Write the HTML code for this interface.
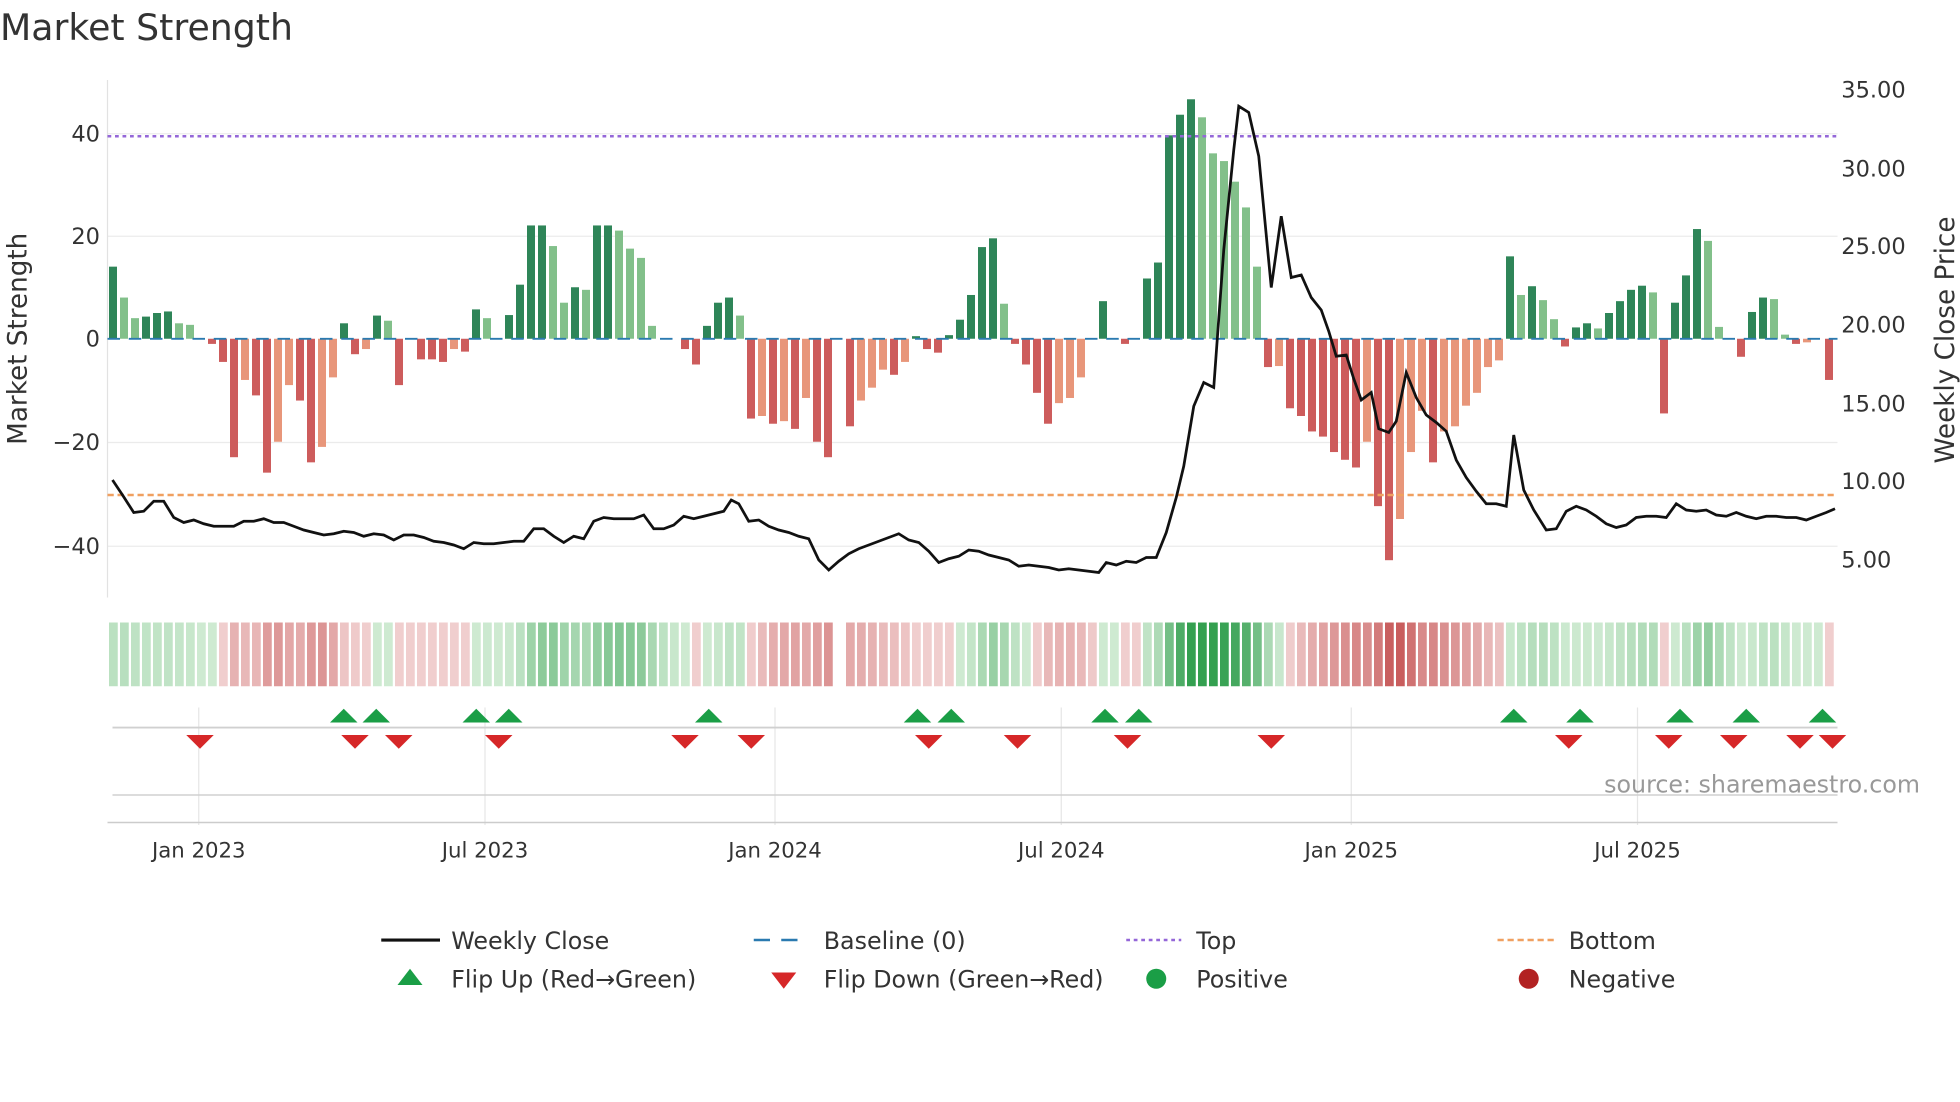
<!DOCTYPE html>
<html><head><meta charset="utf-8"><style>
html,body{margin:0;padding:0;background:#fff;}
svg{display:block;font-family:"DejaVu Sans","Liberation Sans",sans-serif;}
</style></head><body>
<svg id="s" width="1960" height="1102" viewBox="0 0 1568 881.6" preserveAspectRatio="none" xmlns="http://www.w3.org/2000/svg">
<rect width="1568" height="882" fill="#fff"/>
<text x="0" y="32" font-size="29" fill="#333">Market Strength</text>
<g stroke="#ebebeb" stroke-width="1">
<line x1="86" x2="1470" y1="107" y2="107"/><line x1="86" x2="1470" y1="189" y2="189"/>
<line x1="86" x2="1470" y1="354" y2="354"/><line x1="86" x2="1470" y1="437" y2="437"/>
</g>
<line x1="86" x2="86" y1="64" y2="478" stroke="#e2e2e2"/>
<g font-size="18" fill="#333" text-anchor="end">
<text x="80" y="113">40</text><text x="80" y="195">20</text><text x="80" y="277">0</text>
<text x="80" y="360">−20</text><text x="80" y="443">−40</text>
</g>
<g font-size="18" fill="#333">
<text x="1473" y="78">35.00</text><text x="1473" y="141">30.00</text><text x="1473" y="203">25.00</text>
<text x="1473" y="266">20.00</text><text x="1473" y="329">15.00</text><text x="1473" y="391">10.00</text>
<text x="1473" y="454">5.00</text>
</g>
<text transform="translate(21,271) rotate(-90)" font-size="21" fill="#333" text-anchor="middle">Market Strength</text>
<text transform="translate(1563,272) rotate(-90)" font-size="21" fill="#333" text-anchor="middle">Weekly Close Price</text>
<g id="bars"></g>
<line x1="86" x2="1470" y1="271" y2="271" stroke="#2a7ab0" stroke-width="1.5" stroke-dasharray="10,7"/>
<line x1="86" x2="1470" y1="109" y2="109" stroke="#9467d8" stroke-width="2" stroke-dasharray="3,3"/>
<line x1="86" x2="1470" y1="396" y2="396" stroke="#f0a060" stroke-width="2" stroke-dasharray="5,3"/>
<polyline id="pl" fill="none" stroke="#111" stroke-width="2.2"/>
<g id="strip"></g>
<g stroke="#e6e6e6"><line x1="159" x2="159" y1="566" y2="660"/><line x1="388" x2="388" y1="566" y2="660"/><line x1="620" x2="620" y1="566" y2="660"/><line x1="849" x2="849" y1="566" y2="660"/><line x1="1081" x2="1081" y1="566" y2="660"/><line x1="1310" x2="1310" y1="566" y2="660"/></g>
<line x1="90" x2="1470" y1="582" y2="582" stroke="#d0d0d0" stroke-width="1.5"/>
<line x1="90" x2="1470" y1="636" y2="636" stroke="#d0d0d0" stroke-width="1.2"/>
<line x1="86" x2="1470" y1="658" y2="658" stroke="#cccccc" stroke-width="1.2"/>
<g id="flips"></g>
<text x="1536" y="634" font-size="19" fill="#999" text-anchor="end">source: sharemaestro.com</text>
<g font-size="17" fill="#333" text-anchor="middle">
<text x="159" y="686">Jan 2023</text><text x="388" y="686">Jul 2023</text><text x="620" y="686">Jan 2024</text>
<text x="849" y="686">Jul 2024</text><text x="1081" y="686">Jan 2025</text><text x="1310" y="686">Jul 2025</text>
</g>
<g font-size="19" fill="#333">
<line x1="305" x2="352" y1="752" y2="752" stroke="#111" stroke-width="2.5"/><text x="361" y="759">Weekly Close</text>
<line x1="603" x2="646" y1="752" y2="752" stroke="#2a7ab0" stroke-width="2" stroke-dasharray="13,9"/><text x="659" y="759">Baseline (0)</text>
<line x1="901" x2="945" y1="752" y2="752" stroke="#9467d8" stroke-width="2" stroke-dasharray="3,3"/><text x="957" y="759">Top</text>
<line x1="1198" x2="1243" y1="752" y2="752" stroke="#f0a060" stroke-width="2" stroke-dasharray="5,3"/><text x="1255" y="759">Bottom</text>
<polygon points="318,788 338,788 328,775" fill="#1a9e46"/><text x="361" y="790">Flip Up (Red→Green)</text>
<polygon points="617,778 637,778 627,791" fill="#d62728"/><text x="659" y="790">Flip Down (Green→Red)</text>
<circle cx="925" cy="783" r="8" fill="#1a9e46"/><text x="957" y="790">Positive</text>
<circle cx="1223" cy="783" r="8" fill="#b22222"/><text x="1255" y="790">Negative</text>
</g>
</svg>
<script>
var v=[14,8,4,4.3,5,5.3,3,2.7,0,-1,-4.5,-23,-8,-11,-26,-20,-9,-12,-24,-21,-7.5,3,-3,-2,4.5,3.5,-9,0,-4,-4,-4.5,-2,-2.5,5.7,4,-0.3,4.6,10.5,22,22,18,7,10,9.5,22,22,21,17.5,15.7,2.5,0,0,-2,-5,2.5,7,8,4.5,-15.5,-15,-16.5,-16,-17.5,-11.5,-20,-23,0,-17,-12,-9.5,-6,-7,-4.5,0.5,-2,-2.7,0.7,3.7,8.5,17.8,19.5,6.8,-1,-5,-10.5,-16.5,-12.5,-11.5,-7.5,0,7.3,0,-1,0,11.7,14.8,39.5,43.5,46.5,43,36,34.5,30.5,25.5,14,-5.5,-5.3,-13.5,-15,-18,-19,-22,-23.5,-25,-20,-32.5,-43,-35,-22,-14,-24,-18,-17,-13,-10.5,-5.5,-4.2,16,8.5,10.2,7.5,3.8,-1.5,2.2,3,2,5,7.3,9.5,10.3,9,-14.5,7,12.3,21.3,19,2.3,0,-3.5,5.2,8,7.7,0.8,-1,-0.7,0,-8];
var NS="http://www.w3.org/2000/svg";
function el(p,t,a){var e=document.createElementNS(NS,t);for(var k in a)e.setAttribute(k,a[k]);p.appendChild(e);return e;}
var B=document.getElementById('bars'),S=document.getElementById('strip');
var ema=0;
function mix(a,b,t){var r=[];for(var i=0;i<3;i++)r.push(Math.round(a[i]+(b[i]-a[i])*t));return'rgb('+r+')';}
for(var i=0;i<v.length;i++){
 var x=86+8.8*i+1.2,val=v[i],p=i?v[i-1]:0,c;
 if(val>0)c=(val>=p?'#2e8558':'#82c08a');else c=(val<=p?'#cd5c5c':'#e8967a');
 if(Math.abs(val)>0.4){var h=Math.abs(val)*4.12;el(B,'rect',{x:x,y:val>0?271-h:271,width:6.4,height:h,fill:c});}
 ema=ema*0.55+val*0.45;
 if(i==66)continue;
 var t=Math.min(1,Math.abs(ema)/38),col;
 if(ema>=0)col=mix([214,238,216],[52,160,80],Math.max(0.05,t));else col=mix([245,220,220],[196,80,80],Math.max(0.1,t));
 el(S,'rect',{x:x,y:498,width:7,height:51,fill:col});
}
var pts="90,384 98,396 107,410 115,409 123,401 131,401 139,414 147,418 155,416 163,419 171,421 179,421 187,421 195,417 203,417 211,415 219,418 227,418 235,421 243,424 251,426 259,428 267,427 275,425 283,426 291,429 299,427 307,428 315,432 323,428 331,428 339,430 347,433 355,434 363,436 371,439 379,434 387,435 395,435 403,434 411,433 419,433 427,423 435,423 443,429 451,434 459,429 467,431 475,417 483,414 491,415 499,415 507,415 515,412 523,423 531,423 539,420 547,413 555,415 563,413 571,411 579,409 585,400 591,403 599,417 607,416 615,421 623,424 631,426 639,429 647,431 655,448 663,456 671,449 679,443 687,439 695,436 703,433 711,430 719,427 727,432 735,434 743,441 751,450 759,447 767,445 775,440 783,441 791,444 799,446 807,448 815,453 823,452 831,453 839,454 847,456 855,455 863,456 871,457 879,458 885,450 893,452 901,449 909,450 917,446 925,446 933,426 941,398 947,373 955,325 963,306 971,310 979,200 987,120 991,85 999,90 1007,125 1017,230 1025,173 1033,222 1041,220 1049,238 1057,248 1063,265 1069,285 1077,284 1083,303 1089,320 1097,314 1103,343 1111,346 1117,337 1125,298 1133,318 1141,332 1149,338 1157,345 1165,368 1173,382 1181,393 1189,403 1197,403 1205,405 1211,348 1219,392 1227,408 1237,424 1245,423 1253,409 1261,405 1269,408 1277,413 1285,419 1293,422 1301,420 1309,414 1317,413 1325,413 1333,414 1341,403 1349,408 1357,409 1365,408 1373,412 1381,413 1389,410 1397,413 1405,415 1413,413 1421,413 1429,414 1437,414 1445,416 1453,413 1461,410 1468,407";
document.getElementById('pl').setAttribute('points',pts);
var F=document.getElementById('flips');
[275,301,381,407,567,734,761,884,911,1211,1264,1344,1397,1458].forEach(function(x){el(F,'polygon',{points:(x-11)+',578 '+(x+11)+',578 '+x+',567',fill:'#1a9e46'});});
[160,284,319,399,548,601,743,814,902,1017,1255,1335,1387,1440,1466].forEach(function(x){el(F,'polygon',{points:(x-11)+',588 '+(x+11)+',588 '+x+',599',fill:'#d62728'});});
</script>
</body></html>
